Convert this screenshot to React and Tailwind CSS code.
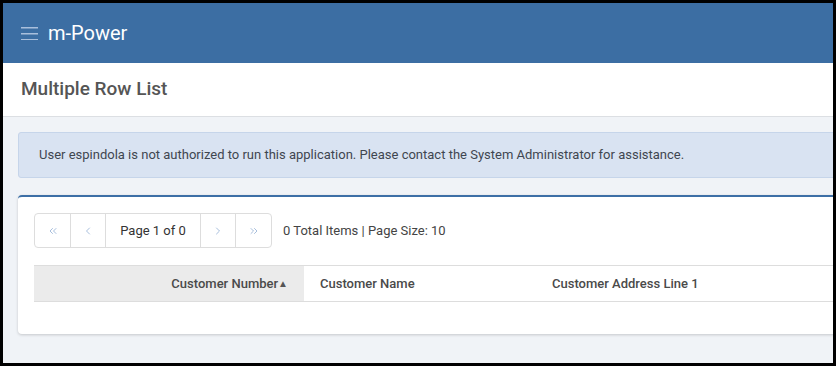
import { ChevronsLeft, ChevronLeft, ChevronRight, ChevronsRight } from 'lucide-react'

export default function App() {
  return (
    <div className="w-[836px] h-[366px] border-[3px] border-black overflow-hidden bg-[#f0f3f7] font-['Roboto',sans-serif]">
      <div className="w-[880px]">
        {/* Top bar */}
        <div className="h-[60px] bg-[#3c6ea3] flex items-center pl-[18px]">
          <svg width="17" height="14" viewBox="0 0 17 14" className="mr-[10px]">
            <rect x="0" y="1" width="17" height="1.5" fill="#a9bfdc" />
            <rect x="0" y="7" width="17" height="1.5" fill="#a9bfdc" />
            <rect x="0" y="13" width="17" height="1.5" fill="#a9bfdc" />
          </svg>
          <span className="text-white text-[20px] leading-none">m-Power</span>
        </div>

        {/* Title */}
        <div className="h-[54px] bg-white border-b border-[#dcdfe3] flex items-center pl-[18px]">
          <h1 className="text-[19px] font-medium text-[#555555]">Multiple Row List</h1>
        </div>

        <div className="px-[15px] pt-[15px]">
          {/* Alert */}
          <div className="h-[46px] bg-[#d9e3f2] border border-[#c6d5ea] rounded-[3px] flex items-center pl-[20px]">
            <p className="text-[13px] text-[#3f4650]">
              User espindola is not authorized to run this application. Please contact the System Administrator for assistance.
            </p>
          </div>

          {/* Card */}
          <div className="mt-[17px] bg-white border-t-2 border-[#3d6fa6] rounded-[4px] shadow-[0_1px_3px_rgba(0,0,0,0.18)] pl-[16px] pt-[16px] pb-[32px]">
            <div className="flex items-center">
              <div className="flex h-[35px] border border-[#dddddd] rounded-[4px] text-[#8aa8d0]">
                <div className="w-[36px] flex items-center justify-center border-r border-[#dddddd]">
                  <ChevronsLeft size={12} strokeWidth={1.5} />
                </div>
                <div className="w-[35px] flex items-center justify-center border-r border-[#dddddd]">
                  <ChevronLeft size={12} strokeWidth={1.5} />
                </div>
                <div className="w-[95px] flex items-center justify-center border-r border-[#dddddd] text-[13px] text-[#333]">
                  Page 1 of 0
                </div>
                <div className="w-[35px] flex items-center justify-center border-r border-[#dddddd]">
                  <ChevronRight size={12} strokeWidth={1.5} />
                </div>
                <div className="w-[35px] flex items-center justify-center">
                  <ChevronsRight size={12} strokeWidth={1.5} />
                </div>
              </div>
              <span className="ml-[11px] text-[13px] text-[#444]">0 Total Items | Page Size: 10</span>
            </div>

            <div className="mt-[17px] flex h-[37px] border-t border-b border-[#dddddd] text-[13px] font-medium text-[#4a4a4a]">
              <div className="w-[270px] bg-[#ebebeb] flex items-center justify-end pr-[16px]">
                Customer Number<span className="text-[10px] text-[#555]">▲</span>
              </div>
              <div className="w-[232px] flex items-center pl-[16px]">Customer Name</div>
              <div className="flex-1 flex items-center pl-[16px]">Customer Address Line 1</div>
            </div>
          </div>
        </div>
      </div>
    </div>
  )
}
